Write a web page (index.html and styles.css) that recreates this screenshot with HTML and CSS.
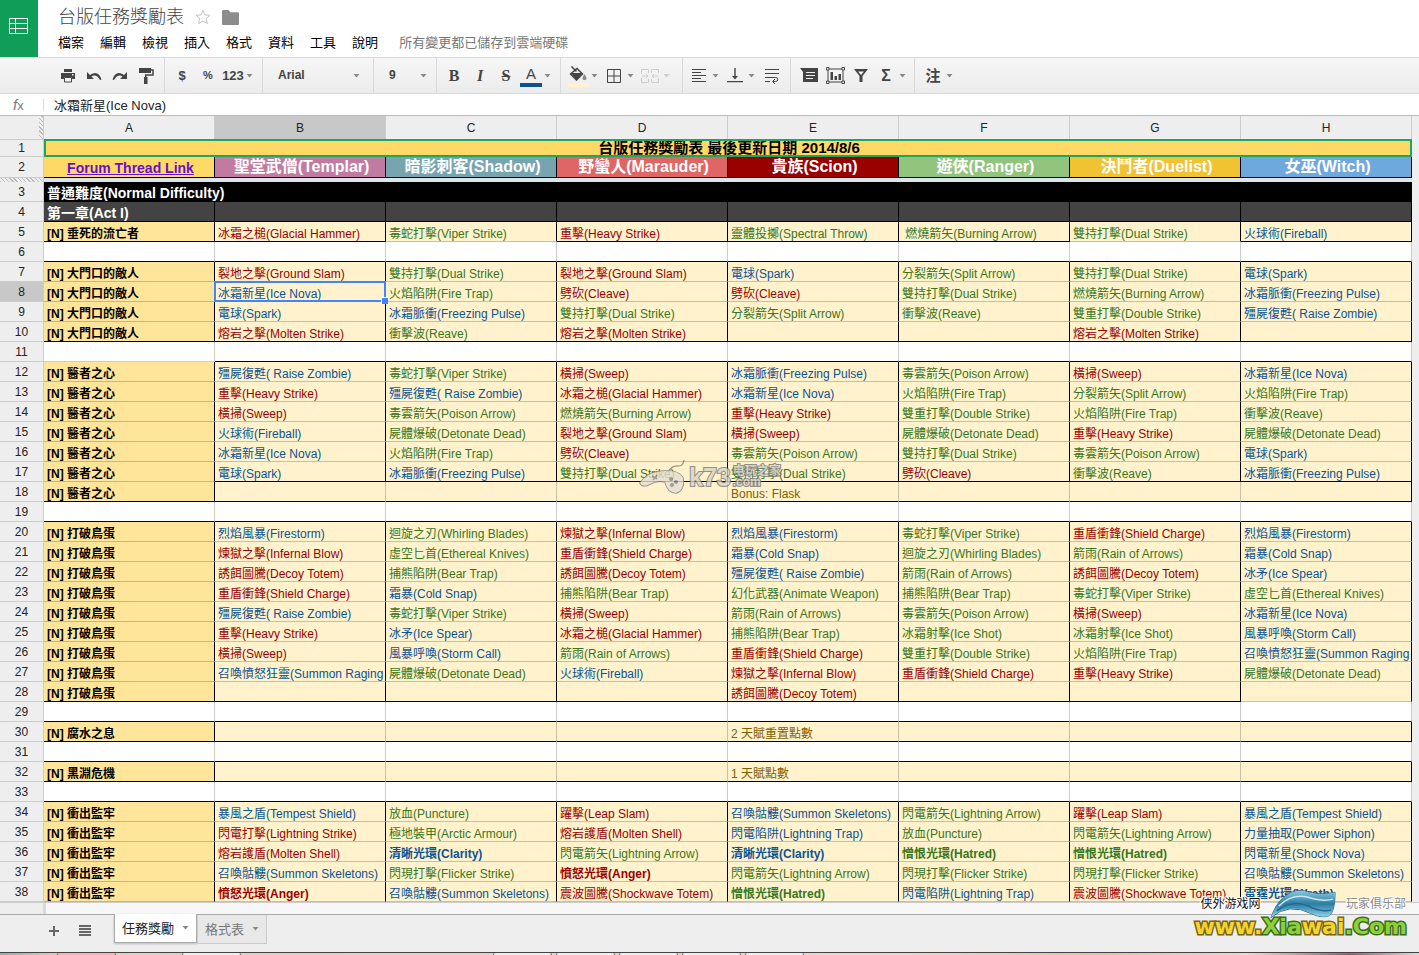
FILE: index.html
```html
<!DOCTYPE html>
<html lang="zh-Hant">
<head>
<meta charset="utf-8">
<title>台版任務獎勵表</title>
<link rel="stylesheet" href="styles.css">
</head>
<body>
<svg class="defs" aria-hidden="true">
  <symbol id="caret" viewBox="0 0 7 4"><path d="M0.5 0h6L3.500 3.500z"/></symbol>
</svg>
<header class="top">
  <a class="logo" href="#" aria-label="Sheets">
    <svg width="20" height="17" viewBox="0 0 20 17" fill="none" stroke="#fff"><path d="M.5.5h18v15H.5zM.5 5.500h18M.5 10.500h18M6.500.5v15"/></svg>
  </a>
  <div class="heading">
    <div class="title-row">
      <h1>台版任務獎勵表</h1>
      <button class="plain" aria-label="Star"><svg width="16" height="16" viewBox="0 0 16 16" fill="none" stroke="#c4c4c4"><path d="M8 1.200l2 4.700 5 .4-3.800 3.300 1.200 5L8 12l-4.400 2.600 1.200-5L1 6.300l5-.4z"/></svg></button>
      <button class="plain" aria-label="Folder"><svg width="17" height="15" viewBox="0 0 16 14" fill="#8c8c8c"><path d="M0 1q0-1 1-1h5l2 2h7q1 0 1 1v10q0 1-1 1H1q-1 0-1-1z"/></svg></button>
    </div>
    <nav class="menu">
      <button>檔案</button><button>編輯</button><button>檢視</button><button>插入</button><button>格式</button><button>資料</button><button>工具</button><button>說明</button>
      <span class="saved">所有變更都已儲存到雲端硬碟</span>
    </nav>
  </div>
</header>

<div class="toolbar" role="toolbar">
  <div class="group g-file">
    <button aria-label="Print"><svg width="16" height="14" viewBox="0 0 16 14" fill="#444"><path d="M4 0h8v3H4zM1 4h14v6h-3V8H4v2H1zM5 9h6v4H5z"/><path d="M4.500 8.500h7v4.500h-7z" fill="#f3f3f3" stroke="#444"/><path d="M12 5h1.500v1.500H12z" fill="#fff"/></svg></button>
    <button aria-label="Undo"><svg width="16" height="10" viewBox="0 0 16 10"><path d="M1 1v7h7L5.500 5.600Q10 2.500 14 9l1.500-.6Q12-1.500 4 4z" fill="#444"/></svg></button>
    <button aria-label="Redo"><svg width="16" height="10" viewBox="0 0 16 10"><path d="M15 1v7H8l2.500-2.400Q6 2.500 2 9L.5 8.400Q4-1.500 12 4z" fill="#444"/></svg></button>
    <button aria-label="Paint format"><svg width="16" height="18" viewBox="0 0 16 18"><path d="M1 1h12v5H1zM6 10h3.500v7H6z" fill="#444"/><path d="M13 3h2v5H7.700V10" fill="none" stroke="#444" stroke-width="1.500"/></svg></button>
  </div>
  <div class="group g-num">
    <button>$</button><button class="small">%</button>
    <button class="drop"><span>123</span><svg class="caret"><use href="#caret"/></svg></button>
  </div>
  <div class="group g-font">
    <select aria-label="Font"><option>Arial</option></select><svg class="caret"><use href="#caret"/></svg>
  </div>
  <div class="group g-size">
    <select aria-label="Font size"><option>9</option></select><svg class="caret"><use href="#caret"/></svg>
  </div>
  <div class="group g-text">
    <button class="serif">B</button><button class="serif"><i>I</i></button><button class="serif"><s>S</s></button>
    <button class="drop" aria-label="Text color"><span class="swatch ink">A</span><svg class="caret"><use href="#caret"/></svg></button>
  </div>
  <div class="group g-cell">
    <button class="drop" aria-label="Fill color"><span class="swatch fill"><svg width="18" height="15" viewBox="0 0 18 15"><path d="M2.500.5l5 5M8 2.500L13.500 8 7.500 14 1.500 8z" fill="none" stroke="#444" stroke-width="1.500"/><path d="M2 7h11.500L7.500 14z" fill="#444"/><path d="M15.500 8q4 6 0 6t0-6z" fill="#888"/></svg></span><svg class="caret"><use href="#caret"/></svg></button>
    <button class="drop" aria-label="Borders"><span><svg width="14" height="14" viewBox="0 0 14 14" fill="none" stroke="#444" stroke-width="1"><path d="M.5.5h13v13H.5zM7 0v14M0 7h14"/></svg></span><svg class="caret"><use href="#caret"/></svg></button>
    <button class="drop off" disabled aria-label="Merge"><span><svg width="18" height="14" viewBox="0 0 18 14" fill="none" stroke="#ccc"><path d="M5 .5H.5v4M.5 9v4.500H7.500V10M7.500 4V.5H5M13 .5h4.500v4M17.500 9v4.500h-7V10M10.500 4V.5H13M1 7h6M17 7h-6M5 5l2 2-2 2M13 5l-2 2 2 2"/></svg></span><svg class="caret"><use href="#caret"/></svg></button>
  </div>
  <div class="group g-align">
    <button class="drop" aria-label="Horizontal align"><span><svg width="16" height="13" viewBox="0 0 16 13" stroke="#444"><path d="M1 .5h14M1 3.500h9M1 6.500h14M1 9.500h9M1 12.500h14"/></svg></span><svg class="caret"><use href="#caret"/></svg></button>
    <button class="drop" aria-label="Vertical align"><span><svg width="16" height="15" viewBox="0 0 16 15"><path d="M7.300 0h1.400v8H11l-3 3.500L5 8h2.300zM0 13h16v1.300H0z" fill="#444"/></svg></span><svg class="caret"><use href="#caret"/></svg></button>
    <button aria-label="Wrap"><svg width="16" height="16" viewBox="0 0 16 16" fill="none" stroke="#444"><path d="M1 1.500h14M1 5.500h14M1 9.500h10.500a2.300 2 0 010 4H9M1 13.500h5M11 11l-2.500 2.500L11 16"/></svg></button>
  </div>
  <div class="group g-insert">
    <button aria-label="Comment"><svg width="18" height="15" viewBox="0 0 18 15"><path d="M0 0h18v14H3V4z" fill="#444"/><path d="M6 4.500h9M6 7.500h9M6 10.500h7" stroke="#eee"/></svg></button>
    <button aria-label="Chart"><svg width="19" height="17" viewBox="0 0 19 17"><path d="M2 2h15v13H2z" fill="none" stroke="#444"/><path d="M4.500 5H7v8H4.500zM8.500 9H11v4H8.500zM12.500 7H15v6h-2.500z" fill="#444"/><g fill="#fff" stroke="#444"><path d="M.5.5h2.500v2.500H.5zM16 .5h2.500v2.500H16zM.5 14h2.500v2.500H.5zM16 14h2.500v2.500H16z"/></g></svg></button>
    <button aria-label="Filter"><svg width="14" height="13" viewBox="0 0 14 13"><path d="M0 0h14L8.500 7v6h-3V7zM4 2.500L7 6l3-3.500z" fill="#444" fill-rule="evenodd"/></svg></button>
    <button class="drop sigma"><span>Σ</span><svg class="caret"><use href="#caret"/></svg></button>
  </div>
  <div class="group g-ime">
    <button class="drop ime"><span>注</span><svg class="caret"><use href="#caret"/></svg></button>
  </div>
</div>

<div class="formula">
  <label for="fx"><i>f</i>x</label>
  <input id="fx" type="text" value="冰霜新星(Ice Nova)">
</div>

<main class="sheet">
<table>
<colgroup><col class="num"><col span="8"></colgroup>
<thead>
<tr><th class="corner"></th><th>A</th><th class="on">B</th><th>C</th><th>D</th><th>E</th><th>F</th><th>G</th><th>H</th></tr>
</thead>
<tbody>
<tr class="r1"><th>1</th><td colspan="8">台版任務獎勵表 最後更新日期 2014/8/6<span class="peer"></span></td></tr>
<tr class="r2"><th>2</th><td class="forum"><a href="#">Forum Thread Link</a></td><td class="templar">聖堂武僧(Templar)</td><td class="shadow">暗影刺客(Shadow)</td><td class="marauder">野蠻人(Marauder)</td><td class="scion">貴族(Scion)</td><td class="ranger">遊俠(Ranger)</td><td class="duelist">決鬥者(Duelist)</td><td class="witch">女巫(Witch)</td></tr>
<tr class="freeze"><th></th><td colspan="8"></td></tr>
<tr class="level"><th>3</th><td colspan="8">普通難度(Normal Difficulty)</td></tr>
<tr class="act"><th>4</th><td>第一章(Act I)</td><td></td><td></td><td></td><td></td><td></td><td></td><td></td></tr>
<tr class="q end"><th>5</th><td>[N] 垂死的流亡者</td><td class="r">冰霜之槌(Glacial Hammer)</td><td class="g open">毒蛇打擊(Viper Strike)</td><td class="r">重擊(Heavy Strike)</td><td class="g">靈體投擲(Spectral Throw)</td><td class="g">&nbsp;燃燒箭矢(Burning Arrow)</td><td class="g open">雙持打擊(Dual Strike)</td><td class="b">火球術(Fireball)</td></tr>
<tr class="gap"><th>6</th><td></td><td></td><td></td><td></td><td></td><td></td><td></td><td></td></tr>
<tr class="q"><th>7</th><td>[N] 大門口的敵人</td><td class="r">裂地之擊(Ground Slam)</td><td class="g">雙持打擊(Dual Strike)</td><td class="r">裂地之擊(Ground Slam)</td><td class="b">電球(Spark)</td><td class="g">分裂箭矢(Split Arrow)</td><td class="g">雙持打擊(Dual Strike)</td><td class="b">電球(Spark)</td></tr>
<tr class="q"><th class="on">8</th><td>[N] 大門口的敵人</td><td class="b active">冰霜新星(Ice Nova)<span class="cursor"></span></td><td class="g">火焰陷阱(Fire Trap)</td><td class="r">劈砍(Cleave)</td><td class="r">劈砍(Cleave)</td><td class="g">雙持打擊(Dual Strike)</td><td class="g">燃燒箭矢(Burning Arrow)</td><td class="b">冰霜脈衝(Freezing Pulse)</td></tr>
<tr class="q"><th>9</th><td>[N] 大門口的敵人</td><td class="b">電球(Spark)</td><td class="b">冰霜脈衝(Freezing Pulse)</td><td class="g">雙持打擊(Dual Strike)</td><td class="g">分裂箭矢(Split Arrow)</td><td class="g">衝擊波(Reave)</td><td class="g">雙重打擊(Double Strike)</td><td class="b">殭屍復甦( Raise Zombie)</td></tr>
<tr class="q end"><th>10</th><td>[N] 大門口的敵人</td><td class="r">熔岩之擊(Molten Strike)</td><td class="g">衝擊波(Reave)</td><td class="r">熔岩之擊(Molten Strike)</td><td></td><td></td><td class="r">熔岩之擊(Molten Strike)</td><td></td></tr>
<tr class="gap"><th>11</th><td class="open"></td><td></td><td></td><td></td><td></td><td></td><td></td><td></td></tr>
<tr class="q"><th>12</th><td>[N] 醫者之心</td><td class="b">殭屍復甦( Raise Zombie)</td><td class="g">毒蛇打擊(Viper Strike)</td><td class="r">橫掃(Sweep)</td><td class="b">冰霜脈衝(Freezing Pulse)</td><td class="g">毒雲箭矢(Poison Arrow)</td><td class="r">橫掃(Sweep)</td><td class="b">冰霜新星(Ice Nova)</td></tr>
<tr class="q"><th>13</th><td>[N] 醫者之心</td><td class="r">重擊(Heavy Strike)</td><td class="b">殭屍復甦( Raise Zombie)</td><td class="r">冰霜之槌(Glacial Hammer)</td><td class="b">冰霜新星(Ice Nova)</td><td class="g">火焰陷阱(Fire Trap)</td><td class="g">分裂箭矢(Split Arrow)</td><td class="g">火焰陷阱(Fire Trap)</td></tr>
<tr class="q"><th>14</th><td>[N] 醫者之心</td><td class="r">橫掃(Sweep)</td><td class="g">毒雲箭矢(Poison Arrow)</td><td class="g">燃燒箭矢(Burning Arrow)</td><td class="r">重擊(Heavy Strike)</td><td class="g">雙重打擊(Double Strike)</td><td class="g">火焰陷阱(Fire Trap)</td><td class="g">衝擊波(Reave)</td></tr>
<tr class="q"><th>15</th><td>[N] 醫者之心</td><td class="b">火球術(Fireball)</td><td class="g">屍體爆破(Detonate Dead)</td><td class="r">裂地之擊(Ground Slam)</td><td class="r">橫掃(Sweep)</td><td class="g">屍體爆破(Detonate Dead)</td><td class="r">重擊(Heavy Strike)</td><td class="g">屍體爆破(Detonate Dead)</td></tr>
<tr class="q"><th>16</th><td>[N] 醫者之心</td><td class="b">冰霜新星(Ice Nova)</td><td class="g">火焰陷阱(Fire Trap)</td><td class="r">劈砍(Cleave)</td><td class="g">毒雲箭矢(Poison Arrow)</td><td class="g">雙持打擊(Dual Strike)</td><td class="g">毒雲箭矢(Poison Arrow)</td><td class="b">電球(Spark)</td></tr>
<tr class="q end"><th>17</th><td class="open">[N] 醫者之心</td><td class="b">電球(Spark)</td><td class="b">冰霜脈衝(Freezing Pulse)</td><td class="g">雙持打擊(Dual Strike)</td><td class="g">雙持打擊(Dual Strike)</td><td class="r">劈砍(Cleave)</td><td class="g">衝擊波(Reave)</td><td class="b">冰霜脈衝(Freezing Pulse)</td></tr>
<tr class="q end wide"><th>18</th><td>[N] 醫者之心</td><td></td><td></td><td></td><td class="n">Bonus: Flask</td><td></td><td></td><td></td></tr>
<tr class="gap"><th>19</th><td></td><td></td><td></td><td></td><td></td><td></td><td></td><td></td></tr>
<tr class="q"><th>20</th><td>[N] 打破鳥蛋</td><td class="b">烈焰風暴(Firestorm)</td><td class="g">迴旋之刃(Whirling Blades)</td><td class="r">煉獄之擊(Infernal Blow)</td><td class="b">烈焰風暴(Firestorm)</td><td class="g">毒蛇打擊(Viper Strike)</td><td class="r">重盾衝鋒(Shield Charge)</td><td class="b">烈焰風暴(Firestorm)</td></tr>
<tr class="q"><th>21</th><td>[N] 打破鳥蛋</td><td class="r">煉獄之擊(Infernal Blow)</td><td class="g">虛空匕首(Ethereal Knives)</td><td class="r">重盾衝鋒(Shield Charge)</td><td class="b">霜暴(Cold Snap)</td><td class="g">迴旋之刃(Whirling Blades)</td><td class="g">箭雨(Rain of Arrows)</td><td class="b">霜暴(Cold Snap)</td></tr>
<tr class="q"><th>22</th><td>[N] 打破鳥蛋</td><td class="r">誘餌圖騰(Decoy Totem)</td><td class="g">捕熊陷阱(Bear Trap)</td><td class="r">誘餌圖騰(Decoy Totem)</td><td class="b">殭屍復甦( Raise Zombie)</td><td class="g">箭雨(Rain of Arrows)</td><td class="r">誘餌圖騰(Decoy Totem)</td><td class="b">冰矛(Ice Spear)</td></tr>
<tr class="q"><th>23</th><td>[N] 打破鳥蛋</td><td class="r">重盾衝鋒(Shield Charge)</td><td class="b">霜暴(Cold Snap)</td><td class="g">捕熊陷阱(Bear Trap)</td><td class="g">幻化武器(Animate Weapon)</td><td class="g">捕熊陷阱(Bear Trap)</td><td class="g">毒蛇打擊(Viper Strike)</td><td class="g">虛空匕首(Ethereal Knives)</td></tr>
<tr class="q"><th>24</th><td>[N] 打破鳥蛋</td><td class="b">殭屍復甦( Raise Zombie)</td><td class="g">毒蛇打擊(Viper Strike)</td><td class="r">橫掃(Sweep)</td><td class="g">箭雨(Rain of Arrows)</td><td class="g">毒雲箭矢(Poison Arrow)</td><td class="r">橫掃(Sweep)</td><td class="b">冰霜新星(Ice Nova)</td></tr>
<tr class="q"><th>25</th><td>[N] 打破鳥蛋</td><td class="r">重擊(Heavy Strike)</td><td class="b">冰矛(Ice Spear)</td><td class="r">冰霜之槌(Glacial Hammer)</td><td class="g">捕熊陷阱(Bear Trap)</td><td class="g">冰霜射擊(Ice Shot)</td><td class="g">冰霜射擊(Ice Shot)</td><td class="b">風暴呼喚(Storm Call)</td></tr>
<tr class="q"><th>26</th><td>[N] 打破鳥蛋</td><td class="r">橫掃(Sweep)</td><td class="b">風暴呼喚(Storm Call)</td><td class="g">箭雨(Rain of Arrows)</td><td class="r">重盾衝鋒(Shield Charge)</td><td class="g">雙重打擊(Double Strike)</td><td class="g">火焰陷阱(Fire Trap)</td><td class="b">召喚憤怒狂靈(Summon Raging Spirit)</td></tr>
<tr class="q"><th>27</th><td>[N] 打破鳥蛋</td><td class="b">召喚憤怒狂靈(Summon Raging Spirit)</td><td class="g">屍體爆破(Detonate Dead)</td><td class="b">火球術(Fireball)</td><td class="r">煉獄之擊(Infernal Blow)</td><td class="r">重盾衝鋒(Shield Charge)</td><td class="r">重擊(Heavy Strike)</td><td class="g">屍體爆破(Detonate Dead)</td></tr>
<tr class="q end"><th>28</th><td>[N] 打破鳥蛋</td><td></td><td></td><td></td><td class="r">誘餌圖騰(Decoy Totem)</td><td></td><td></td><td class="open"></td></tr>
<tr class="gap"><th>29</th><td></td><td></td><td></td><td></td><td></td><td></td><td></td><td></td></tr>
<tr class="q end wide"><th>30</th><td>[N] 腐水之息</td><td></td><td></td><td></td><td class="n">2 天賦重置點數</td><td></td><td></td><td></td></tr>
<tr class="gap"><th>31</th><td></td><td></td><td></td><td></td><td></td><td></td><td></td><td></td></tr>
<tr class="q end wide"><th>32</th><td>[N] 黑淵危機</td><td></td><td></td><td></td><td class="n">1 天賦點數</td><td></td><td></td><td></td></tr>
<tr class="gap"><th>33</th><td></td><td></td><td></td><td></td><td></td><td></td><td></td><td></td></tr>
<tr class="q"><th>34</th><td>[N] 衝出監牢</td><td class="b">暴風之盾(Tempest Shield)</td><td class="g">放血(Puncture)</td><td class="r">躍擊(Leap Slam)</td><td class="b">召喚骷髏(Summon Skeletons)</td><td class="g">閃電箭矢(Lightning Arrow)</td><td class="r">躍擊(Leap Slam)</td><td class="b">暴風之盾(Tempest Shield)</td></tr>
<tr class="q"><th>35</th><td>[N] 衝出監牢</td><td class="r">閃電打擊(Lightning Strike)</td><td class="g">極地裝甲(Arctic Armour)</td><td class="r">熔岩護盾(Molten Shell)</td><td class="b">閃電陷阱(Lightning Trap)</td><td class="g">放血(Puncture)</td><td class="g">閃電箭矢(Lightning Arrow)</td><td class="b">力量抽取(Power Siphon)</td></tr>
<tr class="q"><th>36</th><td>[N] 衝出監牢</td><td class="r">熔岩護盾(Molten Shell)</td><td class="b aura">清晰光環(Clarity)</td><td class="g">閃電箭矢(Lightning Arrow)</td><td class="b aura">清晰光環(Clarity)</td><td class="g aura">憎恨光環(Hatred)</td><td class="g aura">憎恨光環(Hatred)</td><td class="b">閃電新星(Shock Nova)</td></tr>
<tr class="q"><th>37</th><td>[N] 衝出監牢</td><td class="b">召喚骷髏(Summon Skeletons)</td><td class="g">閃現打擊(Flicker Strike)</td><td class="r aura">憤怒光環(Anger)</td><td class="g">閃電箭矢(Lightning Arrow)</td><td class="g">閃現打擊(Flicker Strike)</td><td class="g">閃現打擊(Flicker Strike)</td><td class="b">召喚骷髏(Summon Skeletons)</td></tr>
<tr class="q"><th>38</th><td>[N] 衝出監牢</td><td class="r aura">憤怒光環(Anger)</td><td class="b">召喚骷髏(Summon Skeletons)</td><td class="r">震波圖騰(Shockwave Totem)</td><td class="g aura">憎恨光環(Hatred)</td><td class="b">閃電陷阱(Lightning Trap)</td><td class="r">震波圖騰(Shockwave Totem)</td><td class="b aura">雷霆光環(Wrath)</td></tr>
</tbody>
</table>
<div class="stamp">
  <svg width="50" height="36" viewBox="0 0 50 36"><path d="M31 13Q35 6 42 7q4 0 5-6" fill="none" stroke="#777" stroke-width="1.200"/><path d="M3 24Q10 14 20 13q20-4 26 6 2 12-7 15-8 0-11-11-8-2-15 2-7 4-10-1z" fill="#e4dfd2" stroke="#777" stroke-width="1.500"/><path d="M15 17l5 3M20 16l-4 5" stroke="#888" stroke-width="1.500"/><circle cx="34" cy="20" r="2" fill="#888"/><circle cx="39" cy="23" r="2" fill="#888"/><circle cx="35" cy="26" r="2" fill="#888"/></svg>
  <b>k73</b>
  <span><em>电玩之家</em><em>.com</em></span>
</div>
</main>

<div class="scroll"></div>
<footer class="tabs">
  <button class="plain add" aria-label="Add sheet"><svg width="10" height="10" viewBox="0 0 10 10"><path d="M5 0v10M0 5h10" stroke="#666" stroke-width="2"/></svg></button>
  <button class="plain list" aria-label="All sheets"><svg width="12" height="11" viewBox="0 0 12 11"><path d="M0 1h12M0 4h12M0 7h12M0 10h12" stroke="#666" stroke-width="2"/></svg></button>
  <button class="tab current">任務獎勵<svg class="caret"><use href="#caret"/></svg></button>
  <button class="tab">格式表<svg class="caret"><use href="#caret"/></svg></button>
  <div class="brand">
    <div class="brand-top"><span>侠外游戏网</span>
      <svg width="68" height="32" viewBox="0 0 70 32"><defs><linearGradient id="wave" x1="0" y1="0" x2="0" y2="1"><stop offset="0" stop-color="#8fc9e0"/><stop offset="0.500" stop-color="#2a7da3"/><stop offset="1" stop-color="#9bd4ea"/></linearGradient></defs><path d="M2 30Q12 2 34 2q18 6 34 2 0 20-6 24-8 3-18-2Q20 14 2 30z" fill="url(#wave)" stroke="#1c5f80"/><path d="M10 18Q24 5 40 9q16 5 26 2" fill="none" stroke="#c8e8f3" stroke-width="1.500"/><path d="M8 23q16-12 32-5 14 7 24 4" fill="none" stroke="#1c6a8f" stroke-width="1.500"/></svg>
      <span class="club">玩家俱乐部</span></div>
    <div class="brand-url"><span class="gold">www.</span><span class="lime">Xia</span><span class="gold">wai</span><span class="lime">.Com</span></div>
  </div>
</footer>
<div class="dock"><i></i><i></i><i></i><i></i><i></i><i></i><i></i></div>
</body>
</html>
```

FILE: styles.css
```css
* { box-sizing: border-box; }
body {
  margin: 0;
  min-height: 100vh;
  display: flex;
  flex-direction: column;
  background: #eee;
  color: #222;
  font: 12px/15px "Liberation Sans", Arial, "Noto Sans CJK TC", sans-serif;
}
button, select, input { font: inherit; color: inherit; border: 0; margin: 0; padding: 0; background: none; }
.defs { position: absolute; width: 0; height: 0; }
.caret { width: 7px; height: 4px; fill: #888; flex: none; }
.plain { display: flex; align-items: center; }

/* Title and menus */
.top { display: flex; height: 57px; background: #fff; }
.logo { width: 38px; display: flex; align-items: center; justify-content: center; padding-bottom: 5px; background: #0f9d58; }
.heading { padding: 8px 0 0 20px; }
.title-row { display: flex; align-items: center; gap: 11px; height: 18px; }
.title-row h1 { margin: 0; font-size: 18px; line-height: 20px; font-weight: 300; color: #444; }
.menu { display: flex; align-items: center; gap: 16px; height: 32px; font-size: 13px; color: #000; white-space: nowrap; }
.saved { margin-left: 5px; color: #777; }

/* Toolbar */
.toolbar { display: flex; height: 37px; border: solid #d9d9d9; border-width: 1px 0; background: linear-gradient(#f6f6f6, #ececec); color: #444; }
.group { display: flex; align-items: center; border-right: 1px solid #d9d9d9; }
.group:last-child { border-right: 0; }
.group button { display: flex; align-items: center; justify-content: center; width: 26px; height: 26px; font-size: 13px; font-weight: bold; }
.group .small { font-size: 11px; }
.group .drop { width: 36px; justify-content: flex-start; gap: 2px; padding-left: 1px; }
.drop span { width: 22px; display: flex; justify-content: center; }
.group .serif { font-family: "Liberation Serif", serif; font-size: 16px; }
.g-file { padding: 0 5px 0 55px; }
.g-num { padding: 0 5px 0 4px; }
.g-font { padding: 0 13px 0 15px; width: 111px; }
.g-size { padding: 0 9px 0 15px; width: 63px; }
.group select { flex: 1; min-width: 0; appearance: none; font-size: 12px; font-weight: bold; }
.g-text { padding: 0 5px 0 4px; }
.g-cell { padding: 0 8px 0 5px; }
.g-align { padding: 0 5px 0 4px; }
.g-insert { padding: 0 4px 0 5px; }
.g-ime { padding: 0 5px 0 6px; }
.drop .swatch { height: 22px; align-items: center; border-bottom: 4px solid #0b5394; font-size: 15px; font-weight: normal; }
.drop .fill { border-color: #fff2cc; }
.off .caret { fill: #ccc; }
.sigma span { font-size: 16px; }
.ime span { font-size: 15px; }

/* Formula bar */
.formula { display: flex; align-items: center; height: 21px; background: #fff; }
.formula label { width: 44px; height: 12px; padding-left: 13px; border-right: 1px solid #d5e0c8; font: 13px/12px "Liberation Sans", Arial, sans-serif; color: #777; }
.formula label i { font-size: 15px; }
.formula input { flex: 1; padding: 2px 10px 0; font-size: 13px; line-height: 18px; outline: 0; }

/* Grid */
.sheet { position: relative; padding-right: 7px; border-top: 1px solid #bbb; }
table { width: 100%; table-layout: fixed; border-collapse: separate; border-spacing: 0; }
.num { width: 44px; }
tr { height: 20px; }
th, td { padding: 0; overflow: hidden; white-space: nowrap; border: solid #ccc; border-width: 0 1px 1px 0; }
th { background: #eee; font-weight: normal; line-height: 18px; text-align: center; }
td { background: #fff; padding: 0 0 0 3px; line-height: 13px; vertical-align: bottom; }
thead tr { height: 24px; }
.on { background: #c8c8c8; }
.freeze th { background: repeating-linear-gradient(45deg, #bbb 0 1px, #eee 1px 3px); }
.corner { background: linear-gradient(#eee, #eee) no-repeat left / 39px 100%, repeating-linear-gradient(45deg, #bbb 0 1px, #eee 1px 3px); }
.r1 { height: 17px; }
.r1 th { line-height: 16px; }
.r1 td { position: relative; overflow: visible; background: #ffd966; color: #000; font-size: 15px; line-height: 16px; font-weight: bold; text-align: center; }
.peer { position: absolute; inset: -1px -1px -1px 0; border: 2px solid #1fa463; }
.r2 { height: 21px; }
.r2 td { border-color: #000; color: #fff; font-size: 16px; line-height: 20px; font-weight: bold; text-align: center; }
.r2 .forum { background: #ffd966; font-size: 14px; line-height: 18px; }
.forum a { color: #6611cc; }
.templar { background: #c27ba0; }
.shadow { background: #76a5af; }
.marauder { background: #e06666; }
.scion { background: #990000; }
.ranger { background: #93c47d; }
.duelist { background: #f1c232; }
.witch { background: #6fa8dc; }
.freeze { height: 4px; }
.freeze th, .freeze td { border-bottom: 0; line-height: 0; }
.freeze td { background: #dbe5ea; border-right-color: #dbe5ea; }
.level td, .act td { border-color: #000; color: #fff; font-size: 14px; line-height: 15px; font-weight: bold; }
.level td { background: #000; }
.act td { background: #434343; }
.q td { background: #fff2cc; border-color: #000 #000 #cbbf9f; }
.q td:nth-child(2) { background: #ffe599; border-bottom-color: #cbb67a; color: #000; font-weight: bold; }
.q.end td:not(.open), .gap td:not(.open) { border-bottom-color: #000; }
.wide td:nth-child(n+3):not(:last-child) { border-right-color: #ccc1a3; }
.q .r { color: #990000; }
.q .g { color: #38761d; }
.q .b { color: #0b5394; }
.q .n { color: #7f6000; }
.aura { font-weight: bold; }
.active { position: relative; z-index: 1; overflow: visible; }
.cursor { position: absolute; inset: -1px; border: 2px solid #4285f4; }
.cursor::after { content: ""; position: absolute; right: -4px; bottom: -4px; width: 6px; height: 6px; border: solid #fff; border-width: 1px 0 0 1px; background: #4285f4; }

/* Image stamp over the grid */
.stamp { position: absolute; left: 637px; top: 343px; display: flex; align-items: center; gap: 2px; opacity: .8; color: #d8d2c4; -webkit-text-stroke: 2px #777; paint-order: stroke fill; font-weight: bold; }
.stamp b { font-size: 25px; line-height: 30px; }
.stamp span { display: flex; flex-direction: column; line-height: 11px; }
.stamp em { font-style: normal; }

/* Sheet tabs */
.scroll { height: 12px; border-top: 1px solid #ccc; background: linear-gradient(90deg, #eee 43px, #d5dbe2 43px 46px, #f7f7f7 46px); }
.tabs { position: relative; display: flex; align-items: flex-start; height: 38px; border-top: 1px solid #aaa; background: #eee; }
.tabs .plain { height: 31px; }
.tabs .add { padding-left: 49px; width: 79px; }
.tabs .list { width: 35px; }
.tab { display: flex; align-items: center; gap: 8px; height: 29px; padding: 0 7px; border: solid #ccc; border-width: 0 1px 1px; background: #e8e8e8; color: #777; font-size: 13px; }
.tab.current { margin-top: -1px; border-color: #aaa; background: #fff; color: #222; box-shadow: 0 1px 2px #bbb; }
.dock { height: 3px; flex: 1; display: flex; gap: 4px; padding-left: 57px; border-top: 1px solid #444; background: linear-gradient(90deg, #9aa, #d9cfc6 60px, #e5dad2 900px, #d8c9a0 1100px, #e5d9d2 1250px, #867 1350px, #ddd 1419px); }
.dock i { width: 59px; height: 2px; border: solid #555; border-width: 0 1px; border-radius: 3px 3px 0 0; background: #eee; }
.dock i:first-child { background: #f5b5b5; }
.dock i:nth-child(2) { margin: 0 248px 0 62px; }

/* Site mark */
.brand { position: absolute; right: 12px; bottom: 13px; }
.brand-top { display: flex; align-items: center; justify-content: space-between; height: 22px; padding: 0 1px 0 6px; color: #111; -webkit-text-stroke: 2px #fff; paint-order: stroke fill; }
.brand-top svg { -webkit-text-stroke: 0; }
.club { color: #888; }
.brand-url { font: bold 22px/24px "DejaVu Sans", sans-serif; white-space: nowrap; -webkit-text-stroke: 3px #3f6b1a; paint-order: stroke fill; }
.gold { color: #f3d431; -webkit-text-stroke-color: #7a6410; }
.lime { color: #8bd13c; }
```
